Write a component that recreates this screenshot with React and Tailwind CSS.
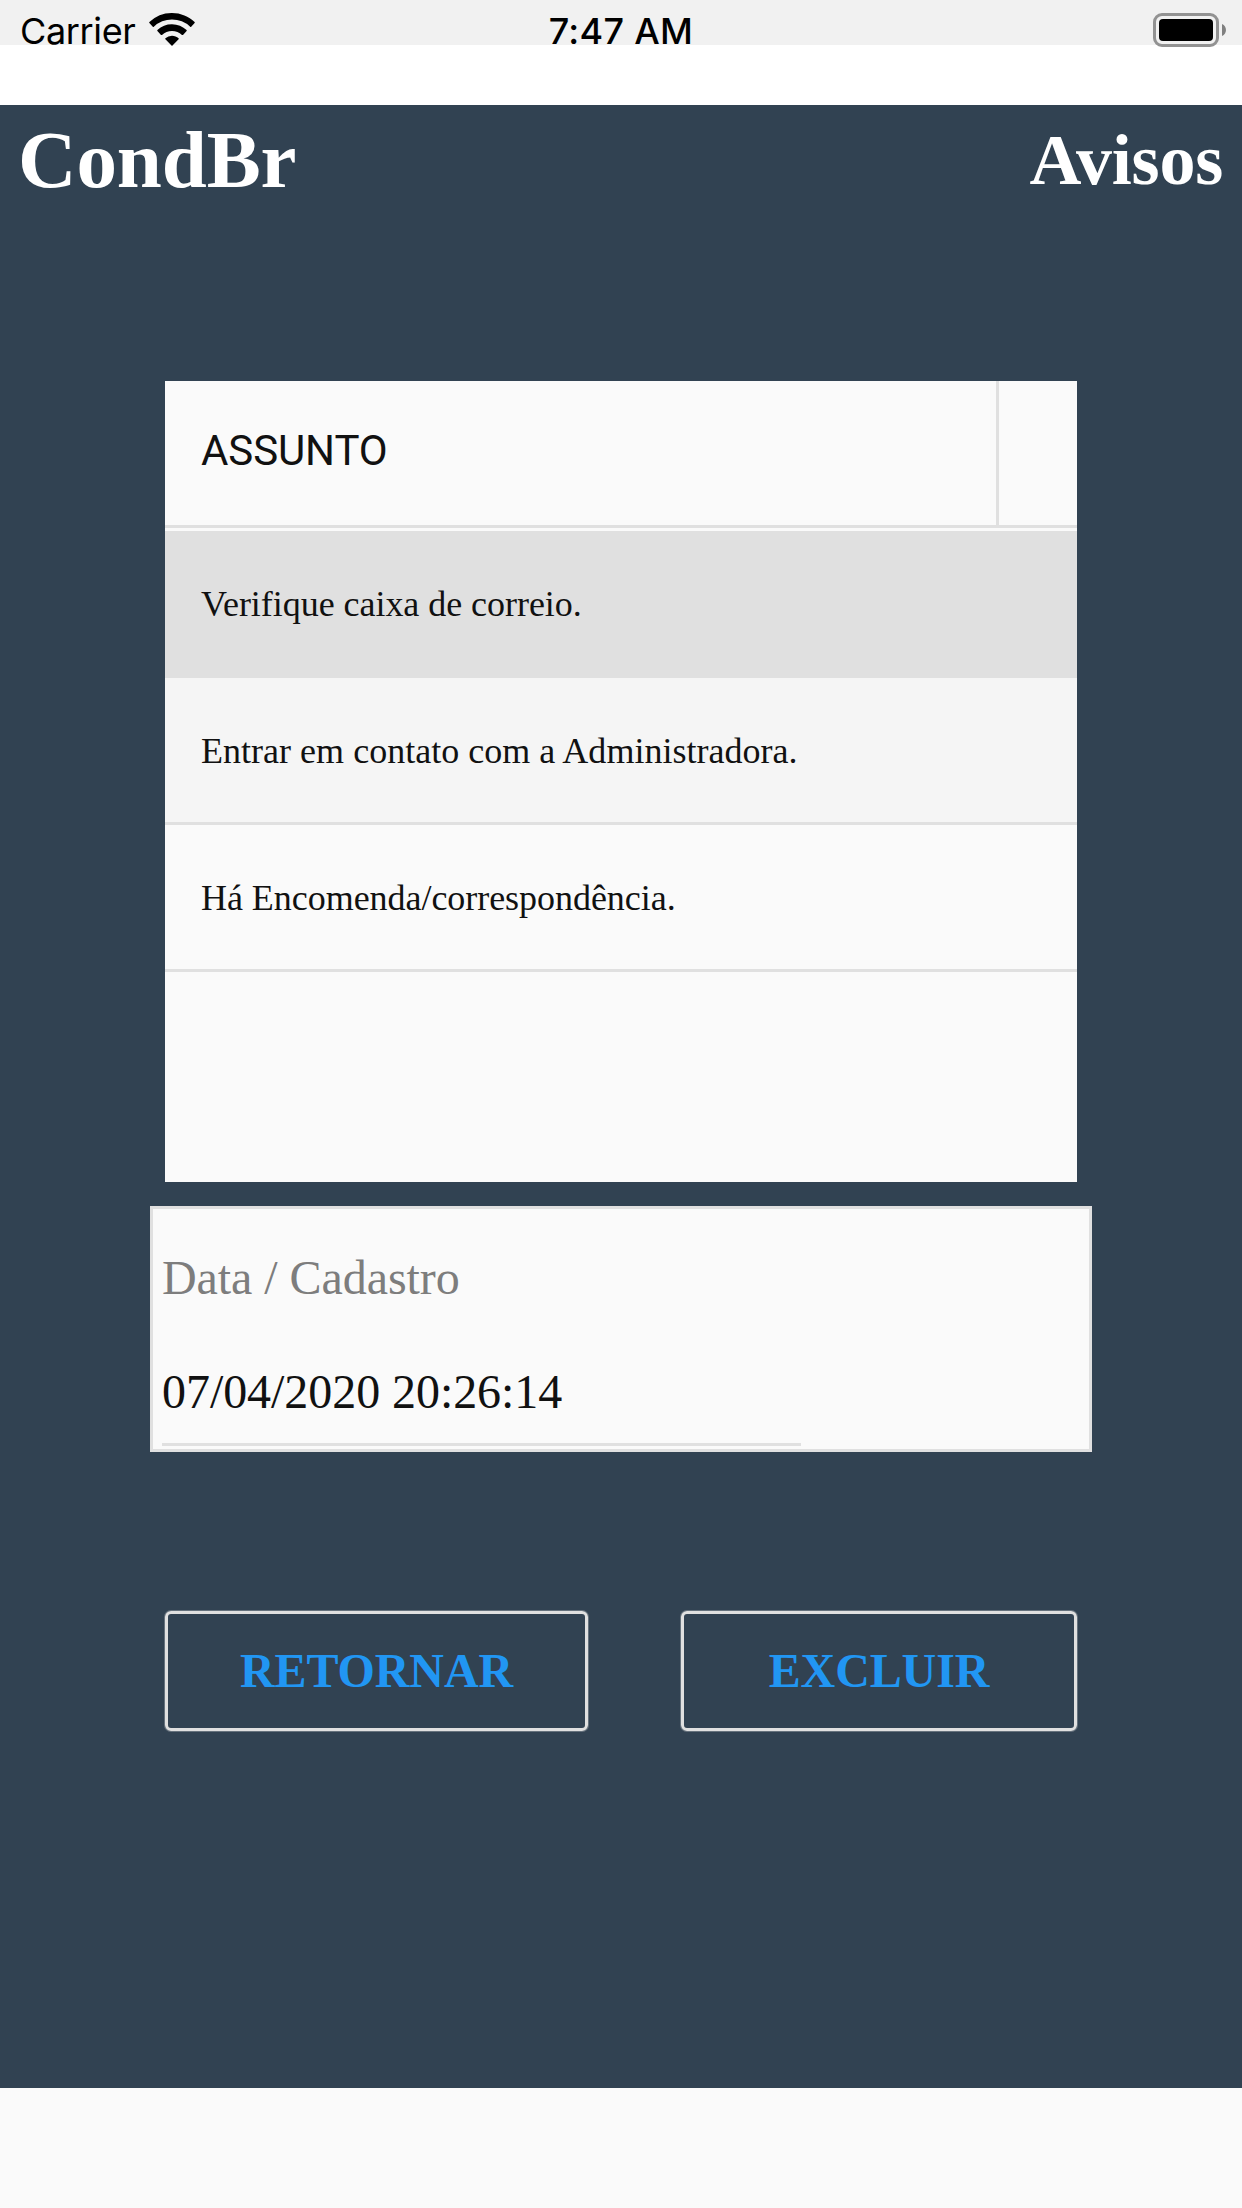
const serif = "font-['Liberation_Serif',serif]";

function WifiIcon() {
  return (
    <svg className="mt-[13px] h-[33px] w-[46px] shrink-0" viewBox="0 0 46 33" fill="#000">
      <path d="M23 0C31.8 0 39.8 3.4 45.6 9.1Q46 9.6 45.6 10L42.2 13.8Q41.7 14.3 41.2 13.8A26.2 26.2 0 0 0 4.8 13.8Q4.3 14.3 3.8 13.8L.4 10Q0 9.6 .4 9.1A32.2 32.2 0 0 1 23 0Z" />
      <path d="M23 11.2C28.600 11.200 33.800 13.400 37.600 17.100Q38 17.600 37.600 18.100L34 21.900Q33.500 22.300 33 21.900A14.600 14.600 0 0 0 13 21.900Q12.500 22.300 12 21.900L8.400 18.100Q8 17.600 8.400 17.100A20.900 20.900 0 0 1 23 11.200Z" />
      <path d="M23 22.700C25.500 22.700 27.800 23.700 29.600 25.300Q30 25.800 29.600 26.300L23.500 32.400Q23 32.900 22.500 32.400L16.400 26.300Q16 25.800 16.400 25.300A9.700 9.700 0 0 1 23 22.700Z" />
    </svg>
  );
}

function BatteryIcon() {
  return (
    <svg className="mt-[13px] mr-[16px] h-[34px] w-[73px]" viewBox="0 0 73 34">
      <rect x="1.500" y="1.500" width="63" height="31" rx="7.500" fill="none" stroke="#929292" strokeWidth="3" />
      <rect x="6" y="6" width="54" height="22" rx="4" fill="#000" />
      <path d="M69 11C74.300 13.300 74.300 20.700 69 23Z" fill="#808080" />
    </svg>
  );
}

function StatusBar() {
  return (
    <div className="h-[105px] bg-white">
      <div className="grid h-[45px] grid-cols-3 bg-[#f1f1f1] font-['Inter',sans-serif] text-[36px] leading-[62px] text-black">
        <div className="flex h-[62px] pl-[20px]">
          <span className="w-[129px] tracking-[-0.35px]">Carrier</span>
          <WifiIcon />
        </div>
        <div className="text-center font-medium tracking-[0.3px]">7:47 AM</div>
        <div className="flex h-[62px] justify-end">
          <BatteryIcon />
        </div>
      </div>
    </div>
  );
}

function Notices() {
  return (
    <section className="mx-[165px] mt-[168px] h-[801px] bg-[#fafafa] text-[#111]">
      <div className="flex h-[147px] border-b-[3px] border-[#e0e0e0]">
        <div className="w-[834px] border-r-[3px] border-[#e0e0e0] pl-[36px] font-['Roboto',sans-serif] text-[42px] leading-[140px] tracking-[-0.1px]">
          ASSUNTO
        </div>
      </div>
      <div className="mt-[3px] text-[36px] leading-[146px]">
        <div className="h-[147px] bg-[#e0e0e0] pl-[36px] tracking-[-0.04px]">Verifique caixa de correio.</div>
        <div className="h-[147px] border-b-[3px] border-[#e0e0e0] bg-[#f5f5f5] pl-[36px] tracking-[0.02px]">
          Entrar em contato com a Administradora.
        </div>
        <div className="h-[147px] border-b-[3px] border-[#e0e0e0] pl-[36px] tracking-[-0.04px]">
          Há Encomenda/correspondência.
        </div>
      </div>
    </section>
  );
}

function DateField() {
  return (
    <section className="mx-[150px] mt-[24px] h-[246px] border-[3px] border-[#e0e0e0] bg-[#fafafa] pl-[9px] text-[48px] tracking-[-0.06px]">
      <div className="h-[136px] leading-[138px] text-[#7d7d7d]">Data / Cadastro</div>
      <div className="h-[98px] w-[639px] leading-[94px] text-[#111]">07/04/2020 20:26:14</div>
      <div className="h-[3px] w-[639px] bg-[#e0e0e0]" />
    </section>
  );
}

function Actions() {
  return (
    <div className="mx-[165px] mt-[159px] flex h-[120px] justify-between text-[48px] font-bold tracking-[-0.1px] text-[#2196f3]">
      <button className="w-[423px] rounded-[6px] border-[3px] border-[#e0e0e0] leading-none shadow-[0_0_0_1px_rgba(224,224,224,0.3)]">
        RETORNAR
      </button>
      <button className="w-[396px] rounded-[6px] border-[3px] border-[#e0e0e0] leading-none shadow-[0_0_0_1px_rgba(224,224,224,0.3)]">
        EXCLUIR
      </button>
    </div>
  );
}

export default function App() {
  return (
    <div className={`h-[2208px] w-[1242px] overflow-hidden bg-[#fafafa] ${serif}`}>
      <StatusBar />
      <main className="flow-root h-[1983px] bg-[#314252]">
        <header className="flex h-[108px] justify-between pr-[19px] pl-[18px] leading-[110px] font-bold text-white">
          <h1 className="text-[81px] tracking-[-0.1px]">CondBr</h1>
          <h2 className="text-[72px] tracking-[-0.2px]">Avisos</h2>
        </header>
        <Notices />
        <DateField />
        <Actions />
      </main>
    </div>
  );
}
